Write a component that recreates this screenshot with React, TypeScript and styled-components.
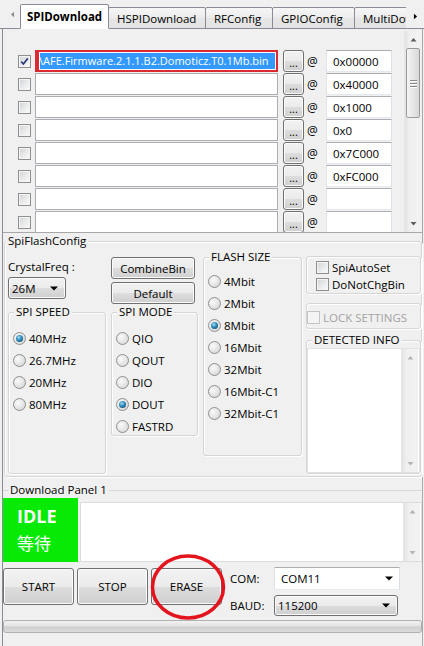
import React from "react";
import styled, { createGlobalStyle } from "styled-components";

const GlobalStyle = createGlobalStyle`
  html, body { margin: 0; padding: 0; background: #f0f0f0; }
  *, *::before, *::after { box-sizing: border-box; }
`;

const FONT = `"Open Sans", "Noto Sans", "Noto Sans CJK SC", sans-serif`;

const Window = styled.div`
  position: relative;
  width: 424px;
  height: 646px;
  overflow: hidden;
  background: #f0f0f0;
  font-family: ${FONT};
  font-size: 11px;
  color: #000;
  display: flex;
  flex-direction: column;
`;

/* ---------- tabs ---------- */
const TabBar = styled.div`
  position: relative;
  flex: none;
  height: 29px;
  display: flex;
  align-items: flex-end;
  padding-left: 3px;
  border-bottom: 1px solid #898c95;
`;

const ArrowSlot = styled.div`
  flex: none;
  width: 18px;
  align-self: stretch;
  display: flex;
  align-items: center;
  justify-content: center;
`;

const Tab = styled.div<{ $active?: boolean; $w: number }>`
  position: relative;
  z-index: ${(p) => (p.$active ? 1 : 0)};
  flex: none;
  width: ${(p) => p.$w}px;
  height: ${(p) => (p.$active ? 25 : 22)}px;
  margin-left: -1px;
  margin-bottom: -1px;
  display: flex;
  align-items: center;
  justify-content: ${(p) => (p.$active ? "center" : "flex-start")};
  padding-left: ${(p) => (p.$active ? 0 : 8)}px;
  border: 1px solid #898c95;
  border-bottom-color: ${(p) => (p.$active ? "transparent" : "#898c95")};
  border-radius: 2px 2px 0 0;
  background: ${(p) => (p.$active ? "#ffffff" : "linear-gradient(#f6f6f6, #ececec 50%, #e6e6e6 51%, #e2e2e2)")};
  font-weight: ${(p) => (p.$active ? 700 : 400)};
  font-size: 11.5px;
  white-space: nowrap;
  overflow: hidden;
`;

const TabSpinner = styled.div`
  position: absolute;
  right: 0;
  top: 5px;
  width: 18px;
  height: 23px;
  z-index: 2;
  background: #f0f0f0;
  display: flex;
  align-items: center;
  justify-content: center;
`;

/* ---------- panel ---------- */
const Panel = styled.div`
  flex: 1;
  min-height: 0;
  margin: 0 1px 0 2px;
  border-left: 1px solid #898c95;
  border-right: 1px solid #a9a9a9;
  display: flex;
  flex-direction: column;
`;

const FileArea = styled.div`
  flex: none;
  height: 204px;
  display: flex;
  overflow: hidden;
  border-bottom: 1px solid #a8a8a8;
`;

const FileList = styled.div`
  flex: 1;
  padding: 21px 0 0 15px;
  display: flex;
  flex-direction: column;
  gap: 1px;
`;

const FileRow = styled.div`
  flex: none;
  height: 22px;
  display: flex;
  align-items: center;
`;

const TextBox = styled.div<{ $w: number; $ml?: number }>`
  flex: none;
  width: ${(p) => p.$w}px;
  height: 22px;
  margin-left: ${(p) => p.$ml ?? 0}px;
  background: #fff;
  border: 1px solid;
  border-color: #abadb3 #dbdfe6 #e3e9ef #e2e3ea;
  display: flex;
  align-items: center;
  padding-left: 6px;
  font-size: 11.5px;
  white-space: nowrap;
  overflow: hidden;
`;

const PathBox = styled.div`
  flex: none;
  width: 243px;
  height: 22px;
  margin-left: 4px;
  background: #fff;
  border: 1px solid #abadb3;
`;

const PathBoxActive = styled.div`
  flex: none;
  width: 243px;
  height: 22px;
  margin-left: 4px;
  background: #fff;
  border: solid #dc2a33;
  border-width: 2px 2px 2px 4px;
  padding: 1px;
  overflow: hidden;
  display: flex;
`;

const Selection = styled.div`
  flex: 1;
  background: #3399ff;
  color: #fff;
  white-space: nowrap;
  overflow: hidden;
  line-height: 16px;
  font-size: 11px;
  text-indent: -1px;
`;

const WinButton = styled.button<{ $w: number; $h: number; $ml?: number; $mt?: number }>`
  flex: none;
  width: ${(p) => p.$w}px;
  height: ${(p) => p.$h}px;
  margin: ${(p) => p.$mt ?? 0}px 0 0 ${(p) => p.$ml ?? 0}px;
  padding: 0;
  font-family: ${FONT};
  font-size: 11.5px;
  color: #000;
  border: 1px solid #707070;
  border-radius: 3px;
  background: linear-gradient(#f2f2f2 0%, #ebebeb 50%, #dddddd 51%, #cfcfcf 100%);
  box-shadow: inset 0 0 0 1px #fbfbfb;
  display: flex;
  align-items: center;
  justify-content: center;
`;

const DotsButton = styled(WinButton)`
  align-items: flex-end;
  padding-bottom: 3px;
  line-height: 10px;
  font-size: 11px;
`;

const AtSign = styled.span`
  flex: none;
  width: 14px;
  margin-left: 3px;
  font-size: 12px;
`;

/* ---------- scrollbars ---------- */
const VScroll = styled.div<{ $mt?: number }>`
  flex: none;
  width: 17px;
  margin-top: ${(p) => p.$mt ?? 0}px;
  margin-right: 1px;
  display: flex;
  flex-direction: column;
  background: linear-gradient(90deg, #e3e3e3, #f0f0f0 30%, #f2f2f2);
  border-left: 1px solid #e6e6e6;
`;

const ScrollArrow = styled.div`
  flex: none;
  height: 17px;
  display: flex;
  align-items: center;
  justify-content: center;
`;

const ScrollTrack = styled.div`
  flex: 1;
  display: flex;
  flex-direction: column;
`;

const Thumb = styled.div<{ $h: number }>`
  flex: none;
  height: ${(p) => p.$h}px;
  margin: 0 1px;
  border: 1px solid #9a9a9a;
  border-radius: 2px;
  background: linear-gradient(90deg, #f4f4f4, #e6e6e6 50%, #d8d8d8);
  display: flex;
  flex-direction: column;
  align-items: center;
  justify-content: center;
  gap: 2px;
`;

const Grip = styled.span`
  width: 7px;
  height: 1px;
  background: #8a8a8a;
  box-shadow: 0 1px 0 #fff;
`;

const Arrow = ({ dir, color }: { dir: "up" | "down" | "left" | "right"; color: string }) => {
  const paths: Record<string, string> = {
    up: "M0.5 4.5 L3.5 1 L6.5 4.5 Z",
    down: "M0.5 1 L3.5 4.5 L6.5 1 Z",
    left: "M4.5 0.5 L1 3.5 L4.5 6.5 Z",
    right: "M1 0.5 L4.5 3.5 L1 6.5 Z",
  };
  const vertical = dir === "up" || dir === "down";
  return (
    <svg width={vertical ? 7 : 5} height={vertical ? 5 : 7} viewBox={vertical ? "0 0 7 5" : "0 0 5.5 7"}>
      <path d={paths[dir]} fill={color} />
    </svg>
  );
};

const ScrollBar = ({ thumb, disabled, mt }: { thumb?: number; disabled?: boolean; mt?: number }) => {
  const c = disabled ? "#b4b4b4" : "#5b5b5b";
  return (
    <VScroll $mt={mt}>
      <ScrollArrow>
        <Arrow dir="up" color={c} />
      </ScrollArrow>
      <ScrollTrack>
        {thumb ? (
          <Thumb $h={thumb}>
            <Grip />
            <Grip />
            <Grip />
          </Thumb>
        ) : null}
      </ScrollTrack>
      <ScrollArrow>
        <Arrow dir="down" color={c} />
      </ScrollArrow>
    </VScroll>
  );
};

/* ---------- checkbox / radio ---------- */
const CheckBox = styled.span<{ $disabled?: boolean }>`
  flex: none;
  width: 13px;
  height: 13px;
  border: 1px solid ${(p) => (p.$disabled ? "#c4c4c4" : "#8e8f8f")};
  background: ${(p) =>
    p.$disabled ? "#f4f4f4" : "linear-gradient(135deg, #d0d2d6 0%, #e8e9eb 50%, #fbfbfb 100%)"};
  box-shadow: inset 0 0 0 1px #f4f4f4;
  display: flex;
  align-items: center;
  justify-content: center;
`;

const Check = ({ checked, disabled }: { checked?: boolean; disabled?: boolean }) => (
  <CheckBox $disabled={disabled}>
    {checked ? (
      <svg width="9" height="9" viewBox="0 0 9 9">
        <path d="M1.2 4.6 L3.4 7 L7.8 1.4" stroke="#2c3f77" strokeWidth="1.7" fill="none" />
      </svg>
    ) : null}
  </CheckBox>
);

const RadioCircle = styled.span<{ $on?: boolean }>`
  flex: none;
  width: 13px;
  height: 13px;
  border-radius: 50%;
  border: 1px solid #8d8f91;
  background: radial-gradient(circle at 35% 35%, #fafafa 0%, #e4e4e4 55%, #cfcfcf 100%);
  display: flex;
  align-items: center;
  justify-content: center;
  &::after {
    content: "";
    display: ${(p) => (p.$on ? "block" : "none")};
    width: 7px;
    height: 7px;
    border-radius: 50%;
    background: radial-gradient(circle at 40% 35%, #a7dcf4 0%, #2b88b9 45%, #0b3a5a 100%);
  }
`;

const RadioItem = styled.div`
  height: 22px;
  display: flex;
  align-items: center;
  gap: 3px;
  font-size: 11.5px;
  white-space: nowrap;
`;

const Radio = ({ label, on }: { label: string; on?: boolean }) => (
  <RadioItem>
    <RadioCircle $on={on} />
    <span>{label}</span>
  </RadioItem>
);

/* ---------- group boxes ---------- */
const Group = styled.fieldset<{ $w?: number; $h: number; $mt?: number; $ml?: number }>`
  flex: none;
  margin: ${(p) => p.$mt ?? 0}px 0 0 ${(p) => p.$ml ?? 0}px;
  padding: 0;
  min-width: 0;
  width: ${(p) => (p.$w ? `${p.$w}px` : "auto")};
  height: ${(p) => p.$h}px;
  border: 1px solid #d5d5d5;
  border-radius: 3px;
  box-shadow: inset 1px 1px 0 #fff, 1px 1px 0 #fff;
`;

const Legend = styled.legend<{ $ml?: number }>`
  margin-left: ${(p) => p.$ml ?? 3}px;
  padding: 0 2px;
  height: 16px;
  line-height: 16px;
  background: #f0f0f0;
  font-size: 11.5px;
`;

const RadioList = styled.div<{ $pt: number }>`
  padding: ${(p) => p.$pt}px 0 0 4px;
  display: flex;
  flex-direction: column;
`;

const ConfigBody = styled.div`
  display: flex;
  padding-left: 3px;
`;

const Column = styled.div<{ $w: number; $ml?: number; $pt?: number }>`
  flex: none;
  width: ${(p) => p.$w}px;
  margin-left: ${(p) => p.$ml ?? 0}px;
  padding-top: ${(p) => p.$pt ?? 0}px;
  display: flex;
  flex-direction: column;
`;

const Label = styled.div`
  height: 16px;
  line-height: 16px;
  font-size: 11.5px;
  white-space: nowrap;
`;

const Combo = styled.div<{ $w: number; $h: number; $mt?: number }>`
  flex: none;
  width: ${(p) => p.$w}px;
  height: ${(p) => p.$h}px;
  margin-top: ${(p) => p.$mt ?? 0}px;
  border: 1px solid #707070;
  border-radius: 3px;
  background: linear-gradient(#f2f2f2 0%, #ebebeb 50%, #dddddd 51%, #cfcfcf 100%);
  box-shadow: inset 0 0 0 1px #fbfbfb;
  display: flex;
  align-items: center;
  justify-content: space-between;
  padding: 0 7px 0 3px;
  font-size: 11.5px;
`;

const EditCombo = styled.div<{ $w: number; $h: number }>`
  width: ${(p) => p.$w}px;
  height: ${(p) => p.$h}px;
  border: 1px solid;
  border-color: #abadb3 #dbdfe6 #e3e9ef #e2e3ea;
  background: #fff;
  display: flex;
  align-items: center;
  justify-content: space-between;
  padding: 0 6px 0 6px;
  font-size: 11.5px;
`;

const DropArrow = () => (
  <svg width="8" height="5" viewBox="0 0 8 5">
    <path d="M0 0.5 L8 0.5 L4 4.5 Z" fill="#000" />
  </svg>
);

const OptionBox = styled.div<{ $h: number; $mt?: number; $pl?: number }>`
  height: ${(p) => p.$h}px;
  margin-top: ${(p) => p.$mt ?? 0}px;
  border: 1px solid #d5d5d5;
  border-radius: 3px;
  box-shadow: inset 1px 1px 0 #fff, 1px 1px 0 #fff;
  padding: 2px 0 0 ${(p) => p.$pl ?? 9}px;
  display: flex;
  flex-direction: column;
`;

const OptionRow = styled.div<{ $muted?: boolean; $h?: number }>`
  height: ${(p) => p.$h ?? 17}px;
  display: flex;
  align-items: center;
  gap: 3px;
  font-size: 11.5px;
  white-space: nowrap;
  color: ${(p) => (p.$muted ? "#a3a3a3" : "#000")};
`;

const InfoArea = styled.div`
  height: 125px;
  background: #fff;
  border: 1px solid #e2e2e2;
  display: flex;
  justify-content: flex-end;
`;

/* ---------- download panel ---------- */
const DownloadGroup = styled.fieldset`
  margin: 5px 0 0 0;
  padding: 0;
  min-width: 0;
  border: solid #d8d8d8;
  border-width: 1px 0 0 0;
`;

const StatusRow = styled.div`
  display: flex;
  align-items: flex-end;
  height: 64px;
`;

const StatusBox = styled.div`
  flex: none;
  width: 75px;
  height: 64px;
  background: #06ea06;
  color: #fff;
  padding: 6px 0 0 14px;
  display: flex;
  flex-direction: column;
`;

const StatusBig = styled.div`
  font-weight: 700;
  font-size: 18px;
  line-height: 25px;
  height: 25px;
`;

const StatusCjk = styled.div`
  font-family: "Noto Sans CJK SC", sans-serif;
  font-size: 17px;
  line-height: 25px;
  margin-top: 1px;
`;

const LogArea = styled.div`
  flex: 1;
  height: 60px;
  margin: 0 0 0 2px;
  background: #fff;
  border: 1px solid #dcdcdc;
  display: flex;
  justify-content: flex-end;
`;

const ActionRow = styled.div`
  display: flex;
  align-items: flex-start;
  margin-top: 6px;
  gap: 3px;
`;

const PortGrid = styled.div`
  margin: -1px 0 0 5px;
  display: grid;
  grid-template-columns: 44px auto;
  grid-template-rows: 23px 21px;
  row-gap: 5px;
  align-items: center;
`;

const ProgressBar = styled.div`
  height: 13px;
  margin-top: 4px;
  border: 1px solid #b0b0b0;
  border-radius: 3px;
  background: linear-gradient(#f2f2f2, #e4e4e4 45%, #cfcfcf 55%, #dcdcdc);
`;

const Annotation = styled.svg`
  position: absolute;
  left: 150px;
  top: 553px;
  pointer-events: none;
`;

const addresses = ["0x00000", "0x40000", "0x1000", "0x0", "0x7C000", "0xFC000", "", ""];

export default function App() {
  return (
    <Window>
      <GlobalStyle />
      <TabBar>
        <ArrowSlot>
          <Arrow dir="left" color="#8c8c8c" />
        </ArrowSlot>
        <Tab $active $w={89}>SPIDownload</Tab>
        <Tab $w={98}>HSPIDownload</Tab>
        <Tab $w={68}>RFConfig</Tab>
        <Tab $w={83}>GPIOConfig</Tab>
        <Tab $w={90}>MultiDownload</Tab>
        <TabSpinner>
          <Arrow dir="right" color="#000" />
        </TabSpinner>
      </TabBar>

      <Panel>
        <FileArea>
          <FileList>
            {addresses.map((addr, i) => (
              <FileRow key={i}>
                <Check checked={i === 0} />
                {i === 0 ? (
                  <PathBoxActive>
                    <Selection>\AFE.Firmware.2.1.1.B2.Domoticz.T0.1Mb.bin</Selection>
                  </PathBoxActive>
                ) : (
                  <PathBox />
                )}
                <DotsButton $w={21} $h={22} $ml={5}>
                  ...
                </DotsButton>
                <AtSign>@</AtSign>
                <TextBox $w={66} $ml={5}>
                  {addr}
                </TextBox>
              </FileRow>
            ))}
          </FileList>
          <ScrollBar thumb={70} mt={2} />
        </FileArea>

        <Group $h={244} $ml={1}>
          <Legend $ml={1}>SpiFlashConfig</Legend>
          <ConfigBody>
            <Column $w={98} $pt={10}>
              <Label>CrystalFreq :</Label>
              <Combo $w={58} $h={22} $mt={2}>
                <span>26M</span>
                <DropArrow />
              </Combo>
              <Group $h={170} $mt={5}>
                <Legend $ml={5}>SPI SPEED</Legend>
                <RadioList $pt={7}>
                  <Radio label="40MHz" on />
                  <Radio label="26.7MHz" />
                  <Radio label="20MHz" />
                  <Radio label="80MHz" />
                </RadioList>
              </Group>
            </Column>

            <Column $w={87} $ml={5} $pt={8}>
              <WinButton $w={84} $h={22}>CombineBin</WinButton>
              <WinButton $w={84} $h={22} $mt={3}>Default</WinButton>
              <Group $h={132}>
                <Legend $ml={5}>SPI MODE</Legend>
                <RadioList $pt={7}>
                  <Radio label="QIO" />
                  <Radio label="QOUT" />
                  <Radio label="DIO" />
                  <Radio label="DOUT" on />
                  <Radio label="FASTRD" />
                </RadioList>
              </Group>
            </Column>

            <Column $w={99} $ml={5}>
              <Group $h={207}>
                <Legend $ml={5}>FLASH SIZE</Legend>
                <RadioList $pt={5}>
                  <Radio label="4Mbit" />
                  <Radio label="2Mbit" />
                  <Radio label="8Mbit" on />
                  <Radio label="16Mbit" />
                  <Radio label="32Mbit" />
                  <Radio label="16Mbit-C1" />
                  <Radio label="32Mbit-C1" />
                </RadioList>
              </Group>
            </Column>

            <Column $w={115} $ml={4} $pt={7}>
              <OptionBox $h={38}>
                <OptionRow>
                  <Check />
                  <span>SpiAutoSet</span>
                </OptionRow>
                <OptionRow>
                  <Check />
                  <span>DoNotChgBin</span>
                </OptionRow>
              </OptionBox>
              <OptionBox $h={26} $mt={9} $pl={0}>
                <OptionRow $muted $h={22}>
                  <Check disabled />
                  <span>LOCK SETTINGS</span>
                </OptionRow>
              </OptionBox>
              <Group $h={142} $mt={3}>
                <Legend $ml={5}>DETECTED INFO</Legend>
                <InfoArea>
                  <ScrollBar disabled />
                </InfoArea>
              </Group>
            </Column>
          </ConfigBody>
        </Group>

        <DownloadGroup>
          <Legend $ml={5}>Download Panel 1</Legend>
          <StatusRow>
            <StatusBox>
              <StatusBig>IDLE</StatusBig>
              <StatusCjk>等待</StatusCjk>
            </StatusBox>
            <LogArea>
              <ScrollBar disabled />
            </LogArea>
          </StatusRow>
          <ActionRow>
            <WinButton $w={71} $h={37}>START</WinButton>
            <WinButton $w={71} $h={37}>STOP</WinButton>
            <WinButton $w={71} $h={37}>ERASE</WinButton>
            <PortGrid>
              <Label>COM:</Label>
              <EditCombo $w={126} $h={23}>
                <span>COM11</span>
                <DropArrow />
              </EditCombo>
              <Label>BAUD:</Label>
              <Combo $w={124} $h={21}>
                <span>115200</span>
                <DropArrow />
              </Combo>
            </PortGrid>
          </ActionRow>
        </DownloadGroup>

        <ProgressBar />
      </Panel>

      <Annotation width="78" height="68" viewBox="0 0 78 68">
        <ellipse cx="38" cy="34" rx="35.5" ry="31" fill="none" stroke="#e3141d" strokeWidth="3.5" />
      </Annotation>
    </Window>
  );
}
